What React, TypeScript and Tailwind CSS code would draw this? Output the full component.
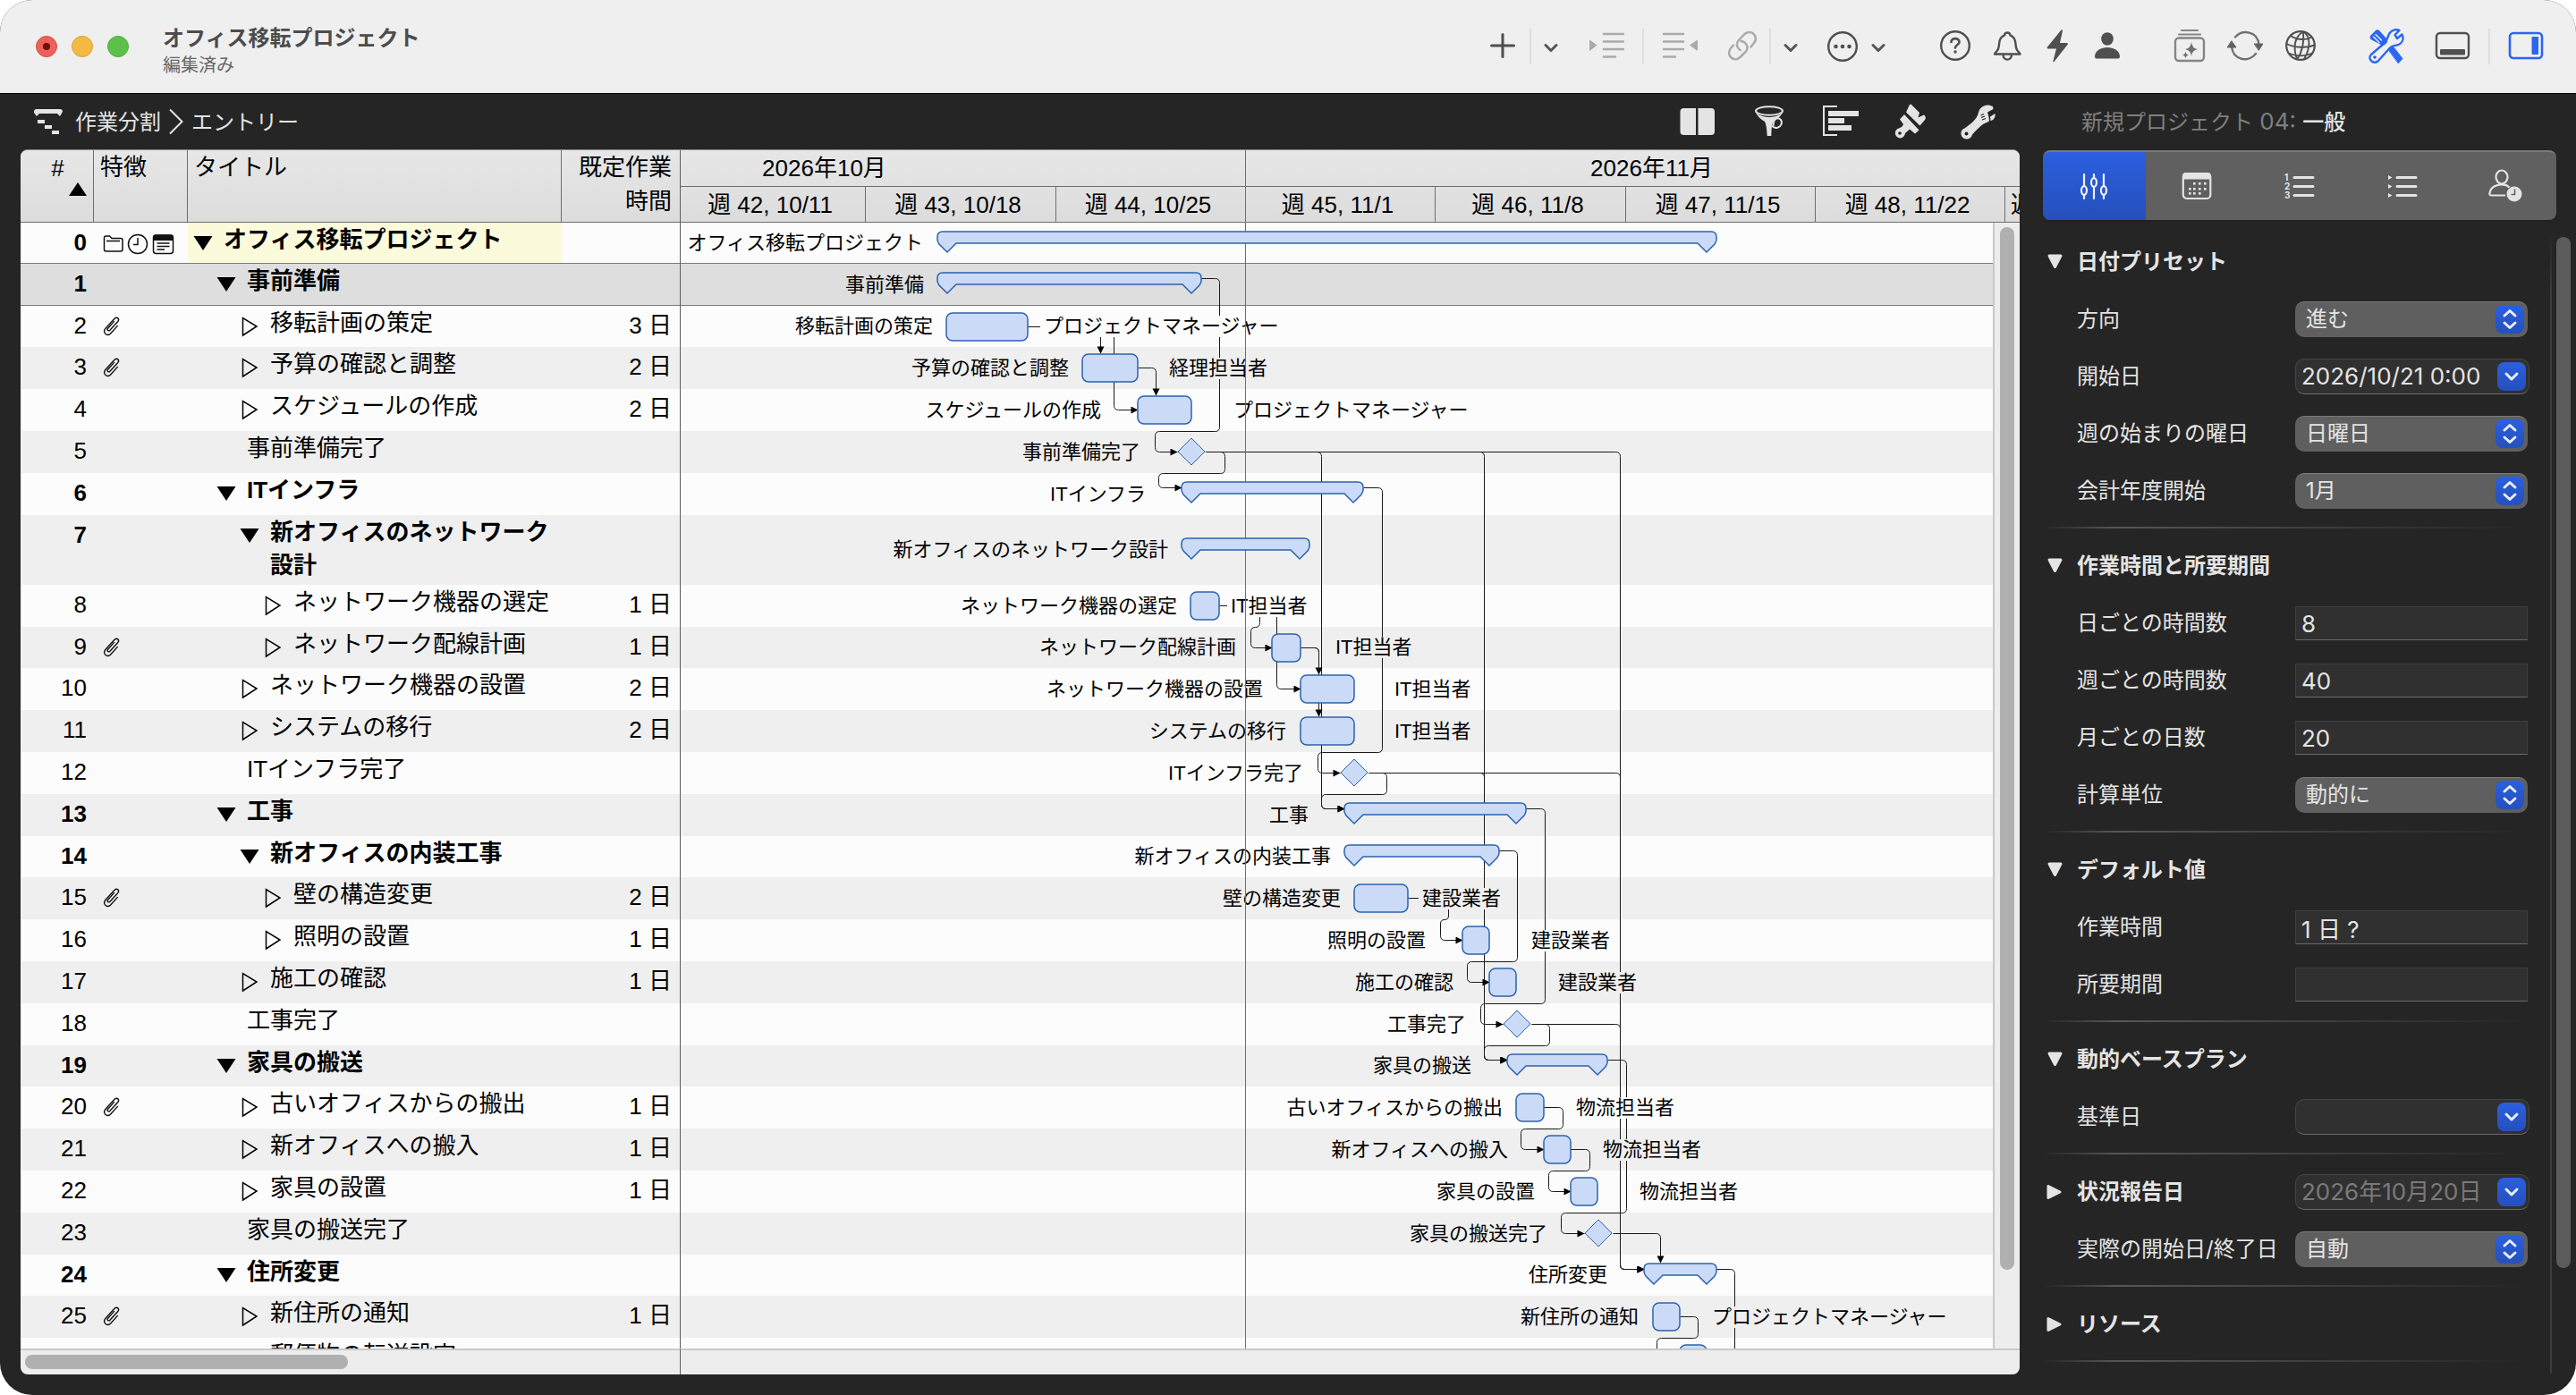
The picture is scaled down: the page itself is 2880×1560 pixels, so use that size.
import React from "react";

/* ------------------------------------------------------------------ data */

type Kind = "summary" | "task" | "milestone";
type Row = {
  title: string;
  level: number;
  open?: boolean;
  closed?: boolean;
  days?: string;
  clip?: boolean;
  partial?: boolean;
  h: 46 | 47 | 78;
  kind: Kind;
  from: number;
  to: number;
  label: number;
  res?: string;
  resX?: number;
};

const PM = "プロジェクトマネージャー";

const ROWS: Row[] = [
  { title: "オフィス移転プロジェクト", level: 0, open: true, h: 46, kind: "summary", from: 287, to: 1158, label: 271 },
  { title: "事前準備", level: 1, open: true, h: 47, kind: "summary", from: 287, to: 582, label: 272 },
  { title: "移転計画の策定", level: 2, closed: true, days: "3 日", clip: true, h: 46, kind: "task", from: 297, to: 388, label: 282, res: PM, resX: 406 },
  { title: "予算の確認と調整", level: 2, closed: true, days: "2 日", clip: true, h: 47, kind: "task", from: 449, to: 511, label: 434, res: "経理担当者", resX: 546 },
  { title: "スケジュールの作成", level: 2, closed: true, days: "2 日", h: 47, kind: "task", from: 511, to: 571, label: 470, res: PM, resX: 618 },
  { title: "事前準備完了", level: 1, h: 47, kind: "milestone", from: 555, to: 587, label: 514 },
  { title: "ITインフラ", level: 1, open: true, h: 47, kind: "summary", from: 560, to: 763, label: 520 },
  { title: "新オフィスのネットワーク設計", level: 2, open: true, h: 78, kind: "summary", from: 560, to: 703, label: 545 },
  { title: "ネットワーク機器の選定", level: 3, closed: true, days: "1 日", h: 47, kind: "task", from: 570, to: 602, label: 555, res: "IT担当者", resX: 615 },
  { title: "ネットワーク配線計画", level: 3, closed: true, days: "1 日", clip: true, h: 46, kind: "task", from: 661, to: 693, label: 621, res: "IT担当者", resX: 732 },
  { title: "ネットワーク機器の設置", level: 2, closed: true, days: "2 日", h: 47, kind: "task", from: 693, to: 753, label: 651, res: "IT担当者", resX: 798 },
  { title: "システムの移行", level: 2, closed: true, days: "2 日", h: 47, kind: "task", from: 693, to: 753, label: 677, res: "IT担当者", resX: 798 },
  { title: "ITインフラ完了", level: 1, h: 47, kind: "milestone", from: 737, to: 769, label: 696 },
  { title: "工事", level: 1, open: true, h: 47, kind: "summary", from: 742, to: 945, label: 702 },
  { title: "新オフィスの内装工事", level: 2, open: true, h: 46, kind: "summary", from: 742, to: 915, label: 727 },
  { title: "壁の構造変更", level: 3, closed: true, days: "2 日", clip: true, h: 47, kind: "task", from: 753, to: 813, label: 738, res: "建設業者", resX: 829 },
  { title: "照明の設置", level: 3, closed: true, days: "1 日", h: 47, kind: "task", from: 874, to: 904, label: 833, res: "建設業者", resX: 951 },
  { title: "施工の確認", level: 2, closed: true, days: "1 日", h: 47, kind: "task", from: 904, to: 934, label: 864, res: "建設業者", resX: 981 },
  { title: "工事完了", level: 1, h: 47, kind: "milestone", from: 919, to: 951, label: 878 },
  { title: "家具の搬送", level: 1, open: true, h: 46, kind: "summary", from: 924, to: 1036, label: 884 },
  { title: "古いオフィスからの搬出", level: 2, closed: true, days: "1 日", clip: true, h: 47, kind: "task", from: 934, to: 965, label: 919, res: "物流担当者", resX: 1001 },
  { title: "新オフィスへの搬入", level: 2, closed: true, days: "1 日", h: 47, kind: "task", from: 965, to: 995, label: 925, res: "物流担当者", resX: 1031 },
  { title: "家具の設置", level: 2, closed: true, days: "1 日", h: 47, kind: "task", from: 995, to: 1025, label: 955, res: "物流担当者", resX: 1072 },
  { title: "家具の搬送完了", level: 1, h: 47, kind: "milestone", from: 1010, to: 1042, label: 969 },
  { title: "住所変更", level: 1, open: true, h: 46, kind: "summary", from: 1077, to: 1158, label: 1036 },
  { title: "新住所の通知", level: 2, closed: true, days: "1 日", clip: true, h: 47, kind: "task", from: 1087, to: 1117, label: 1071, res: PM, resX: 1153 },
  { title: "郵便物の転送設定", level: 2, closed: true, partial: true, h: 47, kind: "task", from: 1117, to: 1147, label: 1075 },
];

const HEIGHT = { 46: "h-[46px]", 47: "h-[47px]", 78: "h-[78px]" } as const;
const INDENT = ["pl-[6px]", "pl-[32px]", "pl-[58px]", "pl-[84px]"];

const rowBg = (i: number) => (i === 1 ? "bg-[#dedede]" : i % 2 ? "bg-[#efefef]" : "bg-[#fcfcfc]");
const rowLine = (i: number) => (i < 2 ? "border-b border-[#7c7c7c]" : "");

const tops: number[] = [];
ROWS.reduce((y, r) => (tops.push(y), y + r.h), 0);
const mid = (i: number) => tops[i] + Math.floor(ROWS[i].h / 2);
const portY = (i: number) => mid(i) - (ROWS[i].kind === "summary" ? 7 : 0);

/* ----------------------------------------------------------------- links */

type Pt = [number, number];

const loop = (a: number, x1: number, x2: number, b: number): Pt[] => [
  [ROWS[a].to, portY(a)],
  [x1, portY(a)],
  [x1, tops[b]],
  [x2, tops[b]],
  [x2, portY(b)],
  [ROWS[b].from, portY(b)],
];
const direct = (a: number, x: number, b: number): Pt[] => [
  [ROWS[a].to, portY(a)],
  [x, portY(a)],
  [x, portY(b)],
  [ROWS[b].from, portY(b)],
];
const drop = (a: number, x: number, b: number): Pt[] => [
  [ROWS[a].to, portY(a)],
  [x, portY(a)],
  [x, mid(b) - (ROWS[b].kind === "summary" ? 14 : 16)],
];

const LINKS: Pt[][] = [
  loop(1, 602, 530, 5),
  direct(2, 484, 4),
  drop(2, 469, 3),
  drop(3, 531, 4),
  loop(5, 608, 534, 6),
  direct(5, 716, 13),
  direct(5, 898, 19),
  direct(5, 1050, 24),
  loop(6, 784, 712, 12),
  loop(8, 647, 637, 9),
  direct(8, 666, 10),
  drop(9, 713, 10),
  drop(9, 713, 11),
  loop(12, 789, 716, 13),
  direct(12, 898, 19),
  direct(12, 1050, 24),
  loop(13, 966, 894, 18),
  loop(14, 935, 879, 17),
  loop(15, 858, 849, 16),
  loop(18, 971, 898, 19),
  direct(18, 1050, 24),
  loop(19, 1057, 984, 23),
  loop(20, 986, 939, 21),
  loop(21, 1016, 970, 22),
  drop(23, 1095, 24),
  [[1158, portY(24)], [1178, portY(24)], [1178, 1400]],
  loop(25, 1137, 1091, 26),
];

function roundedRoute(pts: Pt[]) {
  let d = `M${pts[0][0]} ${pts[0][1]}`;
  for (let i = 1; i < pts.length - 1; i++) {
    const [px, py] = pts[i - 1];
    const [x, y] = pts[i];
    const [nx, ny] = pts[i + 1];
    const r = Math.min(5, Math.hypot(x - px, y - py) / 2, Math.hypot(nx - x, ny - y) / 2);
    d += `L${x - Math.sign(x - px) * r} ${y - Math.sign(y - py) * r}`;
    d += `Q${x} ${y} ${x + Math.sign(nx - x) * r} ${y + Math.sign(ny - y) * r}`;
  }
  const end = pts[pts.length - 1];
  return d + `L${end[0]} ${end[1]}`;
}

/* ----------------------------------------------------------------- chart */

function Bar({ row, i }: { row: Row; i: number }) {
  const y = mid(i);
  const { from: a, to: b } = row;
  const paint = { fill: "#cbdbf7", stroke: "#2c62ae", strokeWidth: 1.5 };
  if (row.kind === "task")
    return <rect x={a} y={y - 15} width={b - a} height={31} rx={7} {...paint} />;
  if (row.kind === "milestone") {
    const c = (a + b) / 2;
    return <path d={`M${c} ${y - 15}L${c + 15} ${y}L${c} ${y + 15}L${c - 15} ${y}Z`} {...paint} strokeWidth={1} />;
  }
  return (
    <path
      d={`M${a + 6} ${y - 13}H${b - 6}Q${b} ${y - 13} ${b} ${y - 7}V${y - 4}Q${b} ${y - 2} ${b - 2} ${y + 1}L${b - 11} ${y + 10}L${b - 21} ${y}H${a + 21}L${a + 11} ${y + 10}L${a + 2} ${y + 1}Q${a} ${y - 2} ${a} ${y - 4}V${y - 7}Q${a} ${y - 13} ${a + 6} ${y - 13}Z`}
      {...paint}
    />
  );
}

function Chart() {
  return (
    <div className="relative min-w-0 flex-1 overflow-hidden">
      <div>
        {ROWS.map((r, i) => (
          <div key={i} className={`${HEIGHT[r.h]} ${rowBg(i)} ${rowLine(i)}`} />
        ))}
      </div>
      <svg className="absolute top-0 left-0 h-[1400px] w-[1467px]" viewBox="0 0 1467 1400" fill="none">
        <defs>
          <marker id="arrow" markerWidth="9" markerHeight="9" refX="9" refY="4" orient="auto" markerUnits="userSpaceOnUse">
            <path d="M1 0L9 4L1 8Z" fill="#000" />
          </marker>
        </defs>
        <g transform="translate(0.5 0.5)" stroke="#1a1a1a">
          {LINKS.map((l, i) => (
            <path key={i} d={roundedRoute(l)} markerEnd="url(#arrow)" />
          ))}
        </g>
      </svg>
      <div className="absolute top-0 left-0 w-full text-[22px] leading-6 whitespace-nowrap">
        {ROWS.map((r, i) => (
          <div key={i} className={`relative flex items-center ${HEIGHT[r.h]}`}>
            {!r.partial && (
              <span className="absolute -translate-x-full" style={{ left: r.label }}>
                {r.title}
              </span>
            )}
            {r.res && (
              <span className={`absolute -ml-1 pl-1 ${rowBg(i)}`} style={{ left: r.resX }}>
                {r.res}
              </span>
            )}
          </div>
        ))}
      </div>
      <div className="absolute inset-y-0 left-[631px] w-px bg-[#6e6e6e]" />
      <svg className="absolute top-0 left-0 h-[1400px] w-[1467px]" viewBox="0 0 1467 1400">
        {ROWS.map((r, i) => (
          <Bar key={i} row={r} i={i} />
        ))}
      </svg>
    </div>
  );
}

function Week({ className, children }: { className: string; children: React.ReactNode }) {
  return (
    <div className={`flex shrink-0 items-center justify-center border-r border-[#6e6e6e] pr-1.5 ${className}`}>{children}</div>
  );
}

function Timeline() {
  return (
    <div className="flex min-w-0 flex-1 flex-col">
      <div className="flex h-[81px] shrink-0 flex-col overflow-hidden border-b border-[#6e6e6e] bg-linear-to-b from-[#e7e7e7] to-[#dcdcdc] text-[26px] leading-8 whitespace-nowrap">
        <div className="flex h-[41px] border-b border-[#6e6e6e]">
          <div className="flex w-[632px] shrink-0 items-center justify-center border-r border-[#6e6e6e] pr-[310px]">2026年10月</div>
          <div className="flex w-[911px] shrink-0 items-center justify-center pr-1">2026年11月</div>
        </div>
        <div className="flex min-h-0 flex-1">
          <Week className="w-[207px]">週 42, 10/11</Week>
          <Week className="w-[213px]">週 43, 10/18</Week>
          <Week className="w-[212px]">週 44, 10/25</Week>
          <Week className="w-[212px]">週 45, 11/1</Week>
          <Week className="w-[213px]">週 46, 11/8</Week>
          <Week className="w-[212px]">週 47, 11/15</Week>
          <Week className="w-[212px]">週 48, 11/22</Week>
          <div className="flex w-[212px] shrink-0 items-center pl-1.5">週 49, 11/29</div>
        </div>
      </div>
      <div className="flex min-h-0 flex-1">
        <Chart />
        <div className="w-[30px] shrink-0 border-l-2 border-[#c9c9c9] bg-[#ededed] pt-[5px] pl-1.5">
          <div className="h-[93%] w-4 rounded-full bg-[#b0b0b0]" />
        </div>
      </div>
    </div>
  );
}

/* --------------------------------------------------------------- outline */

function Clip() {
  return (
    <svg viewBox="0 0 20 22" className="h-[22px] w-5" fill="none" stroke="#111" strokeWidth="1.4" strokeLinecap="round">
      <path d="M12.600 5.400L5.600 13.200C4.200 15 6.300 16.800 7.900 15.200L16.600 5.700C19.200 2.600 15.900 -0.400 12.800 2.500L3 13.200C-0.600 17.400 4 22.900 8.400 19.200L16.400 10.400" />
    </svg>
  );
}

function RootIcons() {
  return (
    <svg viewBox="0 0 80 24" className="h-6 w-20" fill="none" stroke="#111" strokeWidth="1.5">
      <path d="M1.500 18V5Q1.500 3 3.500 3H7.500L10 5.500H20Q22 5.500 22 7.500V18Q22 20 20 20H3.500Q1.500 20 1.500 18ZM4 8.500H19" />
      <circle cx="39" cy="12" r="10.500" />
      <path d="M39 5V12.500H34" />
      <rect x="56.500" y="2" width="22" height="20.500" rx="3" />
      <path d="M56 8V4Q56 1.500 58.500 1.500H76.500Q79 1.500 79 4V8Z" fill="#111" stroke="none" />
      <path d="M60.500 11H74.500M60.500 14.500H74.500M60.500 18H69" />
    </svg>
  );
}

function Disclosure({ open }: { open?: boolean }) {
  return open ? (
    <svg viewBox="0 0 22 22" className="h-[22px] w-[22px]">
      <path d="M0.500 3H21.500L11 19Z" fill="#000" />
    </svg>
  ) : (
    <svg viewBox="0 0 22 24" className="h-6 w-[22px]" fill="none" stroke="#000" strokeWidth="1.500">
      <path d="M3.500 1.500V21L19 11Z" />
    </svg>
  );
}

function Outline() {
  const th = "border-b border-r border-[#6e6e6e] align-top font-normal";
  return (
    <div className="w-[738px] shrink-0 overflow-hidden border-r border-[#5c5c5c]">
      <table className="w-full table-fixed border-separate border-spacing-0 text-[26px]">
        <colgroup>
          <col className="w-[82px]" />
          <col className="w-[105px]" />
          <col className="w-[418px]" />
          <col />
        </colgroup>
        <thead>
          <tr className="h-[81px] bg-linear-to-b from-[#e7e7e7] to-[#dcdcdc] leading-[38px]">
            <th className={th}>
              <div className="pt-1">
                <div className="pl-0.5 leading-8">#</div>
                <svg viewBox="0 0 20 15" className="ml-[54px] h-[15px] w-5">
                  <path d="M10 0L20 15H0Z" fill="#000" />
                </svg>
              </div>
            </th>
            <th className={`${th} pl-[7px] text-left`}>特徴</th>
            <th className={`${th} pl-[7px] text-left`}>タイトル</th>
            <th className="border-b border-[#6e6e6e] pr-[9px] text-right align-top font-normal">
              既定作業
              <br />
              時間
            </th>
          </tr>
        </thead>
        <tbody>
          {ROWS.map((r, i) => (
            <tr key={i} className={`${HEIGHT[r.h]} ${rowBg(i)} ${r.open ? "font-bold" : ""}`}>
              <td className={`${rowLine(i)} pt-[3px] pr-[8px] text-right align-top leading-[38px]`}>{r.partial ? "" : i}</td>
              <td className={`${rowLine(i)} pt-3 pl-[10px] align-top`}>
                {i === 0 && <RootIcons />}
                {r.clip && <Clip />}
              </td>
              <td className={`${rowLine(i)} ${i === 0 ? "bg-[#fbfadb]" : ""} align-top`}>
                <div className={`flex pt-px leading-[37px] ${INDENT[r.level]}`}>
                  {r.open || r.closed ? (
                    <>
                      <button type="button" aria-label={r.title} className="mt-[11px] mr-3 h-[22px] w-[22px] shrink-0">
                        <Disclosure open={r.open} />
                      </button>
                      <span className="max-w-[320px]">{r.title}</span>
                    </>
                  ) : (
                    <span className="pl-[34px]">{r.title}</span>
                  )}
                </div>
              </td>
              <td className={`${rowLine(i)} pt-[3px] pr-[9px] text-right align-top leading-[38px]`}>{r.days}</td>
            </tr>
          ))}
        </tbody>
      </table>
    </div>
  );
}

/* --------------------------------------------------------------- toolbar */

function Tool({ label, w, ml = "", children }: { label: string; w: string; ml?: string; children: React.ReactNode }) {
  return (
    <button type="button" aria-label={label} className={`flex h-10 shrink-0 items-center ${w} ${ml}`}>
      {children}
    </button>
  );
}

const Sep = ({ className }: { className: string }) => <div className={`h-10 w-0.5 shrink-0 bg-[#dedede] ${className}`} />;

const ic = "h-10 w-full";

const ChevronDown = () => (
  <svg viewBox="0 0 16 40" className={ic} fill="none" stroke="#555" strokeWidth="3" strokeLinecap="round" strokeLinejoin="round">
    <path d="M2 18.500L8 24.500L14 18.500" />
  </svg>
);

function TitleBar() {
  return (
    <header className="flex h-[105px] shrink-0 items-center border-b border-black bg-[#efefef] pr-9 pl-10">
      <div className="flex gap-4">
        <button type="button" aria-label="閉じる" className="flex h-6 w-6 items-center justify-center rounded-full border border-[#d64f45] bg-[#ec6158]">
          <span className="h-2 w-2 rounded-full bg-[#6e0f0b]" />
        </button>
        <button type="button" aria-label="しまう" className="h-6 w-6 rounded-full border border-[#dca33a] bg-[#f4b942]" />
        <button type="button" aria-label="拡大" className="h-6 w-6 rounded-full border border-[#50ac40] bg-[#5cc149]" />
      </div>
      <div className="ml-[38px] flex-1 pt-2.5 whitespace-nowrap">
        <h1 className="text-2xl leading-8 font-bold text-[#4c4c4c]">オフィス移転プロジェクト</h1>
        <p className="text-xl leading-7 text-[#666]">編集済み</p>
      </div>
      <Tool label="追加" w="w-7">
        <svg viewBox="0 0 28 40" className={ic} stroke="#4f4f4f" strokeWidth="3" strokeLinecap="round">
          <path d="M1.500 19H26.500M14 6.500V31.500" />
        </svg>
      </Tool>
      <Sep className="ml-4" />
      <Tool label="追加メニュー" w="w-4" ml="ml-[14px]"><ChevronDown /></Tool>
      <Tool label="インデント" w="w-10" ml="ml-[34px]">
        <svg viewBox="0 0 40 40" className={ic} stroke="#aaa" strokeWidth="2.500" strokeLinecap="round">
          <path d="M17 6H39M17 14.500H39M17 23H39M17 31.500H30" />
          <path d="M1 13.500Q1 12.500 2 13L9.500 18.500L2 24.500Q1 25 1 24Z" fill="#aaa" stroke="none" />
        </svg>
      </Tool>
      <Sep className="ml-5" />
      <Tool label="アウトデント" w="w-10" ml="ml-5">
        <svg viewBox="0 0 40 40" className={ic} stroke="#aaa" strokeWidth="2.500" strokeLinecap="round">
          <path d="M2 6H24M2 14.500H24M2 23H24M2 31.500H15" />
          <path d="M40 13.500Q40 12.500 39 13L31 18.500L39 24.500Q40 25 40 24Z" fill="#aaa" stroke="none" />
        </svg>
      </Tool>
      <Tool label="リンク" w="w-8" ml="ml-[34px]">
        <svg viewBox="0 0 32 40" className={ic} fill="none" stroke="#aaa" strokeWidth="2.500" strokeLinecap="round">
          <path d="M13.500 24C9.500 21.500 9 17 11.500 13.500L18 6.500C21.500 3 26.500 3.500 29 6.500C31.500 9.500 31.500 13 29 16L25.500 20.500" />
          <path d="M14.500 14C19.500 14.500 23.500 19.500 20.500 25L14 31.500C10.500 35 6 35 3 32C0.500 29 0.500 25 3 22L6 18.500" />
        </svg>
      </Tool>
      <Sep className="ml-[14px]" />
      <Tool label="リンクメニュー" w="w-4" ml="ml-[14px]"><ChevronDown /></Tool>
      <Tool label="その他" w="w-9" ml="ml-8">
        <svg viewBox="0 0 36 40" className={ic} fill="#4f4f4f">
          <circle cx="18" cy="20" r="15.800" fill="none" stroke="#4f4f4f" strokeWidth="2.400" />
          <circle cx="10.500" cy="20" r="2.300" /><circle cx="18" cy="20" r="2.300" /><circle cx="25.500" cy="20" r="2.300" />
        </svg>
      </Tool>
      <Tool label="その他メニュー" w="w-4" ml="ml-[14px]"><ChevronDown /></Tool>
      <Tool label="ヘルプ" w="w-9" ml="ml-[60px]">
        <svg viewBox="0 0 36 40" className={ic} fill="none" stroke="#4f4f4f" strokeWidth="2.400" strokeLinecap="round">
          <circle cx="18" cy="19" r="15.800" />
          <path d="M13.500 15C13.500 9.800 22.500 9.800 22.500 15C22.500 18.500 18 18 18 21.500" strokeWidth="2.700" />
          <circle cx="18" cy="26" r="1" fill="#4f4f4f" strokeWidth="1.500" />
        </svg>
      </Tool>
      <Tool label="通知" w="w-8" ml="ml-6">
        <svg viewBox="0 0 32 40" className={ic} fill="none" stroke="#4f4f4f" strokeWidth="2.400" strokeLinejoin="round">
          <path d="M2 28.500H30.500C29 25.500 26.500 25 26 21L25 14C24 9.500 21.500 8.500 19.500 7.500C19 3.500 13.500 3.500 13 7.500C11 8.500 8.500 9.500 7.500 14L6.500 21C6 25 3.500 25.500 2 28.500Z" />
          <path d="M11.500 29C11.500 36.500 21 36.500 21 29" />
        </svg>
      </Tool>
      <Tool label="アクション" w="w-6" ml="ml-7">
        <svg viewBox="0 0 24 40" className={ic} fill="#4f4f4f">
          <path d="M16.500 1.500Q18 0.500 18 2.500L15 16H23Q24.500 16.500 23.500 18L8.500 37Q7 38 7.500 36L11 22.500H1.500Q0 22 1 20.500Z" />
        </svg>
      </Tool>
      <Tool label="ユーザー" w="w-7" ml="ml-[30px]">
        <svg viewBox="0 0 28 40" className={ic} fill="#4f4f4f">
          <ellipse cx="14" cy="11.500" rx="6.800" ry="7.300" />
          <path d="M0 31C0.500 17.500 27.500 17.500 28 31Q28 33.500 26 33.500H2Q0 33.500 0 31Z" />
        </svg>
      </Tool>
      <Tool label="ライブラリ" w="w-9" ml="ml-[60px]">
        <svg viewBox="0 0 36 40" className={ic} fill="none" stroke="#858585" strokeWidth="2.200" strokeLinecap="round">
          <rect x="2" y="10.500" width="32" height="25.500" rx="4" strokeWidth="2.400" />
          <path d="M9 2H27M6 6.500H30" />
          <path d="M20 15Q20.800 22 27 23Q20.800 24 20 31Q19.200 24 13 23Q19.200 22 20 15ZM13.500 25.500Q14 29 17 29.500Q14 30 13.500 33.500Q13 30 10 29.500Q13 29 13.500 25.500Z" fill="#707070" stroke="none" />
        </svg>
      </Tool>
      <Tool label="同期" w="w-10" ml="ml-6">
        <svg viewBox="0 0 40 40" className={ic} fill="none" stroke="#707070" strokeWidth="2.400" strokeLinecap="round">
          <path d="M9 9.500C17 0.500 34 2.500 35.500 18M32 28C24 38.500 6.500 35.500 5 20" />
          <path d="M30.500 17H40L35.500 24ZM0.500 21H10L5 14Z" fill="#606060" stroke="#606060" strokeWidth="1" strokeLinejoin="round" />
        </svg>
      </Tool>
      <Tool label="公開" w="w-9" ml="ml-6">
        <svg viewBox="0 0 36 40" className={ic} fill="none" stroke="#4f4f4f" strokeWidth="2.200">
          <circle cx="18" cy="19" r="15.800" />
          <path d="M21 3.500C11 9 9.500 21 14 34.500M21 3.500C22 14 21 25 14 34.500M21 3.500C31 9 28 24 22 34M7 8C13 12.500 24 13.500 30.500 9.500M2.500 17C11 21.500 25 22 33.500 18.500M6 28C14 31.500 24 31 31 27.500" strokeWidth="1.900" />
        </svg>
      </Tool>
      <Tool label="ツール" w="w-10" ml="ml-[58px]">
        <svg viewBox="0 0 40 40" className={ic} fill="none" stroke="#2a66f0" strokeWidth="2.400" strokeLinejoin="round" strokeLinecap="round">
          <path d="M3 29L17.500 16.500C22 13 20.500 9 24 4.500C27 1 31.500 0.500 34.500 2L29.500 7L32 11L37.500 6.500C39.500 10.500 38.500 15 34.500 17.500C30 20 27 17.500 23.500 22L10.500 36.500C5 40.500 -1.500 33.500 3 29Z" />
          <circle cx="7" cy="32" r="1.300" fill="#2a66f0" strokeWidth="1" />
          <path d="M2 8L8.500 1.500Q10.500 0.500 12.500 2.500L20 11Q22 14 20 16.500L17.500 18.500Q15 19.500 13 17.500L2.500 12Q1 10 2 8Z" fill="#2a66f0" stroke="none" />
          <path d="M8 6.500L14.500 13M5.500 9L12 15.500" stroke="#efefef" strokeWidth="1.300" />
          <path d="M22.500 23.500L27 19.500L38 33.500L33.500 38.500Z" fill="#2a66f0" stroke="#2a66f0" strokeWidth="1" />
        </svg>
      </Tool>
      <Tool label="下部パネル" w="w-10" ml="ml-[34px]">
        <svg viewBox="0 0 40 40" className={ic} fill="none" stroke="#4f4f4f" strokeWidth="2.400">
          <rect x="2" y="5" width="36" height="28" rx="4" />
          <rect x="6" y="23" width="28" height="6.500" rx="1" fill="#4f4f4f" stroke="none" />
        </svg>
      </Tool>
      <Sep className="ml-5" />
      <Tool label="右パネル" w="w-10" ml="ml-5">
        <svg viewBox="0 0 40 40" className={ic} fill="none" stroke="#2a66f0" strokeWidth="2.600">
          <rect x="2" y="5" width="36" height="28" rx="4" />
          <rect x="26.500" y="9" width="7.500" height="20" rx="1" fill="#2a66f0" stroke="none" />
        </svg>
      </Tool>
    </header>
  );
}

function ViewBar() {
  return (
    <div className="flex h-[62px] shrink-0 items-center pr-[26px] pl-[14px] text-2xl text-[#e4e4e4]">
      <svg viewBox="0 0 34 30" className="h-[30px] w-[34px]" fill="#e4e4e4">
        <path d="M1 4Q1 1 4 1H30Q33 1 33 4L30 9L27 6H7L4 9L1 5Z" />
        <rect x="5" y="13" width="8" height="4" /><rect x="13" y="19" width="8" height="4" /><rect x="21" y="25" width="8" height="4" />
      </svg>
      <a href="#wbs" className="ml-[13px] pt-0.5">作業分割</a>
      <svg viewBox="0 0 16 30" className="mx-[9px] h-[30px] w-4" fill="none" stroke="#e4e4e4" strokeWidth="2">
        <path d="M1 1.500L14.500 15L1 28.500" />
      </svg>
      <a href="#entry" className="flex-1 pt-0.5">エントリー</a>
      <Tool label="分割表示" w="w-10">
        <svg viewBox="0 0 40 40" className={ic} fill="#e4e4e4">
          <path d="M4.500 5H18V35H4.500Q0.500 35 0.500 31V9Q0.500 5 4.500 5ZM20.500 5H35Q39 5 39 9V31Q39 35 35 35H20.500Z" />
        </svg>
      </Tool>
      <Tool label="フィルタ" w="w-8" ml="ml-11">
        <svg viewBox="0 0 32 40" className={ic} fill="none" stroke="#e4e4e4">
          <ellipse cx="16" cy="8" rx="15" ry="4.800" strokeWidth="2" />
          <path d="M1 10C5 14 13 15 16 15C19 15 27 14 31 10C28 15 24.500 18 20.500 20Q18.500 23 18.300 36H13.700Q13 23 11 20C6 17 3 14 1 10Z" fill="#e4e4e4" stroke="none" />
          <path d="M23 16.500C28 15 31 19 29.500 23C28 27 23 28 20 25.500C21.500 24 19.500 21 23 16.500Z" strokeWidth="2" />
        </svg>
      </Tool>
      <Tool label="ガント" w="w-10" ml="ml-11">
        <svg viewBox="0 0 40 40" className={ic} fill="#e4e4e4">
          <path d="M0 2H16V4H2V34H16V36H0Z" />
          <rect x="6" y="8" width="34" height="6" /><rect x="6" y="16" width="18" height="6" /><rect x="6" y="24" width="26" height="6" />
        </svg>
      </Tool>
      <Tool label="スタイル" w="w-9" ml="ml-10">
        <svg viewBox="0 0 36 40" className={ic} fill="#e4e4e4">
          <path d="M17 1Q18 0 19.500 1.500L28 10L26.500 15.500L33 12.500Q35.500 14 34.500 17.500L28.500 24.500L13 9.500Z" />
          <path d="M11 12L27.500 29.500L23 33.500L17 28.500L12 33C11.500 37 7.500 40 3.500 37.500C-0.500 34.500 0.500 30 3.500 28C7.500 26.500 9 25.500 10 23L6 17.500Z" />
          <circle cx="6" cy="33" r="1.800" fill="#252525" />
        </svg>
      </Tool>
      <Tool label="設定" w="w-10" ml="ml-[38px]">
        <svg viewBox="0 0 40 40" className={ic} fill="#e4e4e4">
          <path d="M20 10C21 3 29 -1 36 3L36.500 6L30 9.500L31.500 15L32 19.500L28 21.500C24 23 20 27 13 34.500C12 39.500 5 41.500 1.500 37C-1 33 1 28.500 4.500 27.500C11 22.500 18 18 20 10Z" />
          <path d="M33 14.500L38.500 11C39.500 14.500 36.500 19 33.500 19Z" />
          <circle cx="6.500" cy="33.500" r="2" fill="#252525" />
          <path d="M22.500 13L26 11.500M23 15.500L27 14M24 18L28 16.500" stroke="#252525" strokeWidth="1.200" />
        </svg>
      </Tool>
    </div>
  );
}

/* ------------------------------------------------------------- inspector */

const PanelBlue = "bg-linear-to-b from-[#2b5fe0] to-[#2550bb]";

function Tabs() {
  const base = "flex flex-1 items-center justify-center";
  return (
    <div className="flex h-[78px] shrink-0 overflow-hidden rounded-lg border-t-2 border-[#7a7a7a] bg-[#606060] shadow-sm">
      <button type="button" aria-label="一般" className={`${base} ${PanelBlue}`}>
        <svg viewBox="0 0 32 32" className="h-8 w-8" fill="none" stroke="#f2f2f2" strokeWidth="2.200" strokeLinecap="round">
          <path d="M5 3V16M5 26V30M16 3V7M16 17V30M27 3V16M27 26V30" />
          <ellipse cx="5" cy="21" rx="3" ry="4.800" /><ellipse cx="16" cy="12" rx="3" ry="4.800" /><ellipse cx="27" cy="21" rx="3" ry="4.800" />
        </svg>
      </button>
      <button type="button" aria-label="カレンダー" className={base}>
        <svg viewBox="0 0 34 32" className="h-8 w-[34px]" fill="#e4e4e4">
          <rect x="1.800" y="2" width="30.500" height="28" rx="4" fill="none" stroke="#e4e4e4" strokeWidth="2.200" />
          <path d="M1 8.500V5Q1 1 5 1H29Q33 1 33 5V8.500Z" />
          {[[13, 12], [19, 12], [25, 12], [8, 18], [13, 18], [19, 18], [25, 18], [8, 23], [13, 23], [19, 23]].map(([x, y]) => (
            <rect key={`${x}-${y}`} x={x} y={y} width="2.600" height="2.600" />
          ))}
        </svg>
      </button>
      <button type="button" aria-label="番号" className={base}>
        <svg viewBox="0 0 34 32" className="h-8 w-[34px]" fill="#e4e4e4">
          <path d="M11 6.500H32M11 16.500H32M11 26.500H32" stroke="#e4e4e4" strokeWidth="3" strokeLinecap="round" />
          <g fontSize="10" fontWeight="bold" fontFamily="Inter"><text x="0" y="10">1</text><text x="0" y="20">2</text><text x="0" y="30">3</text></g>
        </svg>
      </button>
      <button type="button" aria-label="リスト" className={base}>
        <svg viewBox="0 0 34 32" className="h-8 w-[34px]" fill="#e4e4e4">
          <path d="M11 6.500H32M11 16.500H32M11 26.500H32" stroke="#e4e4e4" strokeWidth="3" strokeLinecap="round" />
          <path d="M1 4L5.500 6.500L1 9ZM1 14L5.500 16.500L1 19ZM1 24L5.500 26.500L1 29Z" />
        </svg>
      </button>
      <button type="button" aria-label="ユーザーと時間" className={base}>
        <svg viewBox="0 0 38 38" className="h-[38px] w-[38px]" fill="none" stroke="#e4e4e4" strokeWidth="2.200">
          <ellipse cx="15" cy="9" rx="6.500" ry="7.500" />
          <path d="M19 29.500H3.500Q1 29.500 1.500 27C2.500 17 18 15 23.500 20.500" />
          <circle cx="29" cy="28" r="8.500" fill="#e4e4e4" stroke="none" />
          <path d="M29.500 22.500V28.500H25.500" stroke="#606060" strokeWidth="1.600" />
        </svg>
      </button>
    </div>
  );
}

const DateBox = "flex h-10 w-[262px] items-center rounded-[10px] border border-[#454545] border-b-[#6a6a6a] bg-[#303030]";

function Stepper() {
  return (
    <span className={`pointer-events-none absolute top-1 right-1 flex h-8 w-8 items-center justify-center rounded-lg ${PanelBlue}`}>
      <svg viewBox="0 0 20 26" className="h-[26px] w-5" fill="none" stroke="#e8edfb" strokeWidth="3" strokeLinecap="round" strokeLinejoin="round">
        <path d="M4 9L10 3.500L16 9M4 17L10 22.500L16 17" />
      </svg>
    </span>
  );
}

type Field = { type: "select" | "text" | "date"; label: string; value: string };

const GROUPS: { title: string; open: boolean; date?: string; fields: Field[] }[] = [
  {
    title: "日付プリセット",
    open: true,
    fields: [
      { type: "select", label: "方向", value: "進む" },
      { type: "date", label: "開始日", value: "2026/10/21 0:00" },
      { type: "select", label: "週の始まりの曜日", value: "日曜日" },
      { type: "select", label: "会計年度開始", value: "1月" },
    ],
  },
  {
    title: "作業時間と所要期間",
    open: true,
    fields: [
      { type: "text", label: "日ごとの時間数", value: "8" },
      { type: "text", label: "週ごとの時間数", value: "40" },
      { type: "text", label: "月ごとの日数", value: "20" },
      { type: "select", label: "計算単位", value: "動的に" },
    ],
  },
  {
    title: "デフォルト値",
    open: true,
    fields: [
      { type: "text", label: "作業時間", value: "1 日 ?" },
      { type: "text", label: "所要期間", value: "" },
    ],
  },
  { title: "動的ベースプラン", open: true, fields: [{ type: "date", label: "基準日", value: "" }] },
  { title: "状況報告日", open: false, date: "2026年10月20日", fields: [{ type: "select", label: "実際の開始日/終了日", value: "自動" }] },
  { title: "リソース", open: false, fields: [] },
];

function DateField({ id, label, value, dim }: { id: string; label: string; value: string; dim?: boolean }) {
  return (
    <div className={DateBox}>
      <input
        id={id}
        aria-label={label}
        type="text"
        defaultValue={value}
        className={`min-w-0 flex-1 bg-transparent pl-1.5 text-[26px] outline-none ${dim ? "text-[#7a7a7a]" : ""}`}
      />
      <button type="button" aria-label={`${label}を選択`} className={`mr-[3px] flex h-8 w-8 shrink-0 items-center justify-center rounded-lg ${PanelBlue}`}>
        <svg viewBox="0 0 20 12" className="h-3 w-5" fill="none" stroke="#e8edfb" strokeWidth="3" strokeLinecap="round" strokeLinejoin="round">
          <path d="M4 3L10 9L16 3" />
        </svg>
      </button>
    </div>
  );
}

function FieldRow({ id, f }: { id: string; f: Field }) {
  return (
    <div className="flex h-16 items-center">
      <label htmlFor={id} className="w-[282px] shrink-0 pl-[38px] whitespace-nowrap">
        {f.label}
      </label>
      {f.type === "select" && (
        <div className="relative w-[260px]">
          <select id={id} defaultValue={f.value} className="h-10 w-full appearance-none rounded-[10px] border-t border-[#7b7b7b] bg-[#5f5f5f] pb-0.5 pl-3 outline-none">
            <option value={f.value}>{f.value}</option>
          </select>
          <Stepper />
        </div>
      )}
      {f.type === "date" && <DateField id={id} label={f.label} value={f.value} />}
      {f.type === "text" && (
        <input id={id} type="text" defaultValue={f.value} className="h-[38px] w-[260px] border border-[#3e3e3e] border-b-[#6a6a6a] bg-[#303030] pl-1.5 text-[26px] outline-none" />
      )}
    </div>
  );
}

function Inspector() {
  return (
    <aside className="flex w-[622px] shrink-0 flex-col pl-[26px] text-2xl leading-8 text-[#e4e4e4]">
      <div className="flex h-[63px] shrink-0 items-center pl-[43px] whitespace-pre">
        <span className="text-[#7f7f7f]">
          新規プロジェクト<span className="text-[26px]"> 04: </span>
        </span>
        <span className="font-medium">一般</span>
      </div>
      <div className="pr-[22px]">
        <Tabs />
      </div>
      <div className="mt-[15px] flex min-h-0 flex-1">
        <div className="min-w-0 flex-1 overflow-hidden">
          {GROUPS.map((g, gi) => (
            <section key={g.title} className="pb-[10px]">
              <div className="flex h-16 items-center">
                <button type="button" className="flex w-[282px] shrink-0 items-center pl-1 text-left font-bold whitespace-nowrap">
                  <svg viewBox="0 0 20 20" className="mr-[14px] h-5 w-5" fill="#e4e4e4" stroke="#e4e4e4" strokeWidth="3" strokeLinejoin="round">
                    {g.open ? <path d="M3 3H16L9.500 15.500Z" /> : <path d="M2 3.500V16.500L15 10Z" />}
                  </svg>
                  {g.title}
                </button>
                {g.date && <DateField id="status-date" label={g.title} value={g.date} dim />}
              </div>
              {g.fields.map((f, fi) => (
                <FieldRow key={f.label} id={`f-${gi}-${fi}`} f={f} />
              ))}
              <div className="mt-2 mr-6 h-0.5 bg-linear-to-r from-transparent via-[#565656] via-15% to-transparent" />
            </section>
          ))}
        </div>
        <div className="mb-6 w-0.5 bg-linear-to-b from-transparent via-[#3c3c3c] via-5% to-[#3c3c3c]" />
        <div className="w-[27px] shrink-0 pt-1 pl-[5px]">
          <div className="h-[89%] w-4 rounded-full bg-[#5c5c5c]" />
        </div>
      </div>
    </aside>
  );
}

export default function App() {
  return (
    <div className="h-screen w-full bg-white">
      <div className="flex h-full flex-col overflow-hidden rounded-[36px] bg-[#252525] font-['Liberation_Sans','Noto_Sans_CJK_JP',sans-serif] text-black">
        <TitleBar />
        <div className="flex min-h-0 flex-1">
          <main className="flex min-w-0 flex-1 flex-col pb-[23px] pl-[23px]">
            <ViewBar />
            <div className="flex min-h-0 flex-1 flex-col overflow-hidden rounded-lg border-t border-[#8a8a8a] bg-[#ededed]">
              <div className="flex min-h-0 flex-1">
                <Outline />
                <Timeline />
              </div>
              <div className="flex h-[29px] shrink-0">
                <div className="w-[738px] border-t-2 border-r border-t-[#c9c9c9] border-r-[#5c5c5c] pt-[5px] pl-[5px]">
                  <div className="h-4 w-[361px] rounded-full bg-[#b0b0b0]" />
                </div>
                <div className="flex-1 border-t-2 border-[#c9c9c9]" />
              </div>
            </div>
          </main>
          <div className="flex min-h-0 font-['Inter','Noto_Sans_CJK_JP',sans-serif]">
            <Inspector />
          </div>
        </div>
      </div>
    </div>
  );
}
